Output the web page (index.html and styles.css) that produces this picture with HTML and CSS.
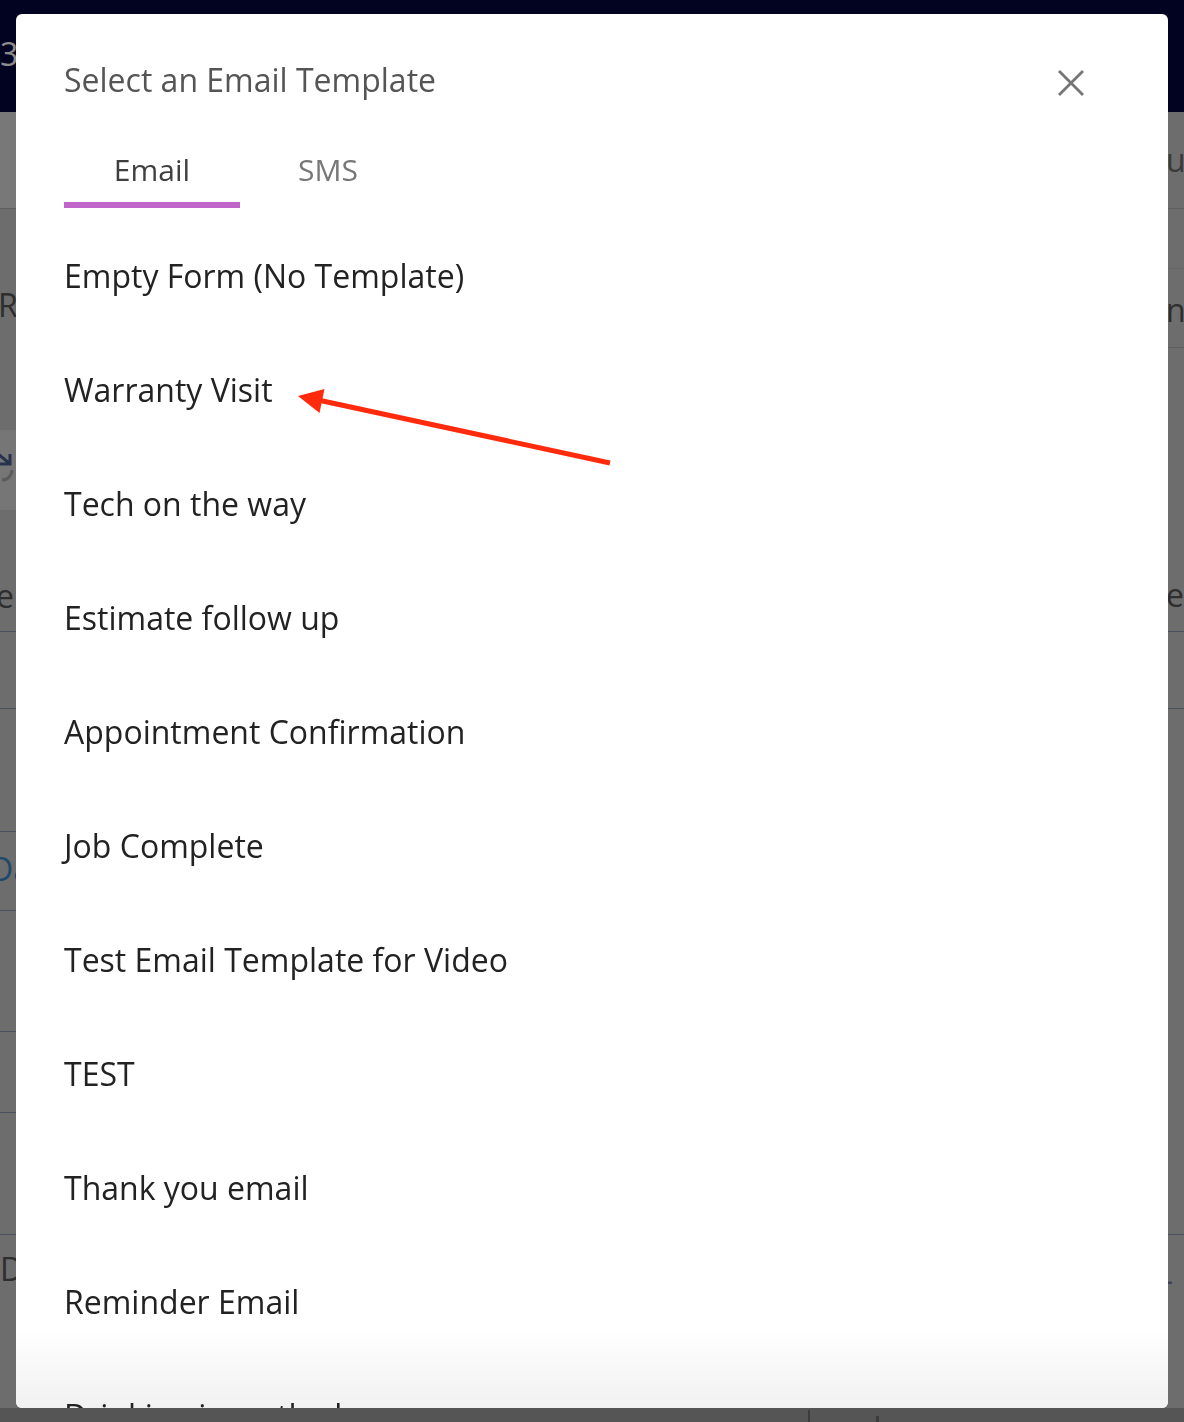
FILE: index.html
```html
<!DOCTYPE html>
<html lang="en">
<head>
<meta charset="utf-8">
<title>Select an Email Template</title>
<link rel="stylesheet" href="styles.css">
</head>
<body>
<div class="page">
  <header class="topbar"><span class="topbar-num">3</span></header>
  <div class="cols">
    <div class="col col-left">
      <div class="row r-l1"></div>
      <div class="row r-l2"><span class="bg-text">R</span></div>
      <div class="row r-l3"><span class="bg-icon"><svg width="16" height="36" viewBox="0 0 16 36"><path d="M-4 4 L10 16 M10 6 V16 H0" fill="none" stroke="#27324f" stroke-width="3"/><path d="M12 22 A10 10 0 0 1 2 32" fill="none" stroke="#5b5b5b" stroke-width="3"/></svg></span></div>
      <div class="row r-l4"><span class="bg-text">e</span></div>
      <div class="row r-l5"></div>
      <div class="row r-l6"></div>
      <div class="row r-l7"><span class="bg-text bg-link">Da</span></div>
      <div class="row r-l8"></div>
      <div class="row r-l9"></div>
      <div class="row r-l10"></div>
      <div class="row r-l11"><span class="bg-text">D</span></div>
    </div>
    <div class="col col-right">
      <div class="row r-r1"><span class="bg-text">ur</span></div>
      <div class="row r-r2"></div>
      <div class="row r-r3"><span class="bg-text">ni</span></div>
      <div class="row r-r4"><span class="bg-text">er</span></div>
      <div class="row r-r5"></div>
      <div class="row r-r6"></div>
      <div class="row r-r7"><span class="bg-dash">- -</span></div>
    </div>
  </div>
  <div class="page-bottom"><span class="page-bottom-rule"></span><span class="page-bottom-mark"></span></div>
</div>

<div class="modal" role="dialog" aria-labelledby="modal-title">
  <div class="modal-header">
    <h2 class="modal-title" id="modal-title">Select an Email Template</h2>
    <button class="close" aria-label="Close">
      <svg width="40" height="40" viewBox="0 0 40 40"><path d="M8 8 L32 32 M32 8 L8 32" stroke="#757575" stroke-width="2.8" fill="none"/></svg>
    </button>
  </div>
  <div class="tabs">
    <div class="tab active">Email</div>
    <div class="tab">SMS</div>
  </div>
  <ul class="list">
    <li class="item">Empty Form (No Template)</li>
    <li class="item">Warranty Visit</li>
    <li class="item">Tech on the way</li>
    <li class="item">Estimate follow up</li>
    <li class="item">Appointment Confirmation</li>
    <li class="item">Job Complete</li>
    <li class="item">Test Email Template for Video</li>
    <li class="item">TEST</li>
    <li class="item">Thank you email</li>
    <li class="item">Reminder Email</li>
    <li class="item">Drinking is on the house</li>
  </ul>
  <div class="fade"></div>
</div>

<svg class="annotation" width="1184" height="1422" viewBox="0 0 1184 1422" aria-hidden="true">
  <line x1="610" y1="463" x2="318" y2="400" stroke="#ff2b0c" stroke-width="5"/>
  <polygon points="298,396 324.5,389 319.5,413" fill="#ff2b0c"/>
</svg>
</body>
</html>
```
FILE: styles.css
```css
html, body {
  margin: 0;
  padding: 0;
  overflow: hidden;
}
body {
  width: 1184px;
  height: 1422px;
  font-family: "Open Sans", "Liberation Sans", sans-serif;
}

/* dimmed page behind the dialog */
.page {
  width: 1184px;
  height: 1422px;
  background: #6d6d6d;
  overflow: hidden;
}
.topbar {
  height: 112px;
  background: #020321;
  display: flex;
  align-items: flex-start;
}
.topbar-num {
  font-size: 32px;
  line-height: 38px;
  padding-top: 35px;
  color: #8c8c8c;
}
.cols {
  display: grid;
  grid-template-columns: 592px 592px;
}
.row {
  box-sizing: border-box;
  display: flex;
  align-items: flex-start;
  white-space: nowrap;
}
.bg-text {
  font-size: 32px;
  line-height: 38px;
  color: #2e2e2e;
}
.bg-link { color: #1d4a6c; }
.col-right .row { padding-left: 574px; }

.r-l1 { height: 97px; background: #787878; border-bottom: 1px solid #5e5e5e; }
.r-l2 { height: 221px; padding-top: 77px; }
.r-l2 .bg-text { margin-left: -2px; }
.r-l3 { height: 80px; background: #767676; padding-top: 18px; width: 100px; }
.r-l4 { height: 122px; border-bottom: 1px solid #4a4f5d; padding-top: 67px; }
.r-l4 .bg-text { margin-left: -4px; }
.r-l5 { height: 77px; border-bottom: 1px solid #4a4f5d; }
.r-l6 { height: 123px; border-bottom: 1px solid #4a4f5d; }
.r-l7 { height: 79px; border-bottom: 1px solid #4a4f5d; padding-top: 18px; }
.r-l7 .bg-text { margin-left: -10px; }
.r-l8 { height: 121px; border-bottom: 1px solid #4a4f5d; }
.r-l9 { height: 81px; border-bottom: 1px solid #4a4f5d; }
.r-l10 { height: 122px; border-bottom: 1px solid #4a4f5d; }
.r-l11 { height: 173px; padding-top: 15px; }

.r-r1 { height: 97px; border-bottom: 1px solid #5e5e5e; padding-top: 29px; }
.r-r1 .bg-text { color: #3a3a3a; }
.r-r2 { height: 60px; border-bottom: 1px solid #666666; }
.r-r3 { height: 79px; border-bottom: 1px solid #5e5e5e; padding-top: 22px; }
.r-r4 { height: 284px; border-bottom: 1px solid #4a4f5d; padding-top: 228px; }
.r-r5 { height: 77px; border-bottom: 1px solid #4a4f5d; }
.r-r6 { height: 526px; border-bottom: 1px solid #4a4f5d; }
.r-r7 { height: 173px; padding-top: 32px; }
.bg-dash {
  font-size: 20px;
  letter-spacing: 4px;
  color: #3c4352;
  font-weight: 700;
}
.page-bottom {
  height: 14px;
  background: #555555;
  display: flex;
  align-items: flex-end;
}
.page-bottom-rule {
  margin-left: 808px;
  width: 2px;
  height: 12px;
  background: #3c3c3c;
}
.page-bottom-mark {
  margin-left: 66px;
  width: 3px;
  height: 6px;
  background: #3c3c3c;
}

/* dialog */
.modal {
  position: fixed;
  left: 16px;
  top: 14px;
  width: 1152px;
  height: 1394px;
  background: #ffffff;
  border-radius: 6px;
  overflow: hidden;
}
.modal-header {
  display: flex;
  justify-content: space-between;
  align-items: flex-start;
  height: 38px;
  padding: 47px 77px 0 48px;
}
.modal-title {
  margin: 0;
  font-size: 32px;
  line-height: 38px;
  font-weight: 400;
  color: #555555;
}
.close {
  width: 40px;
  height: 40px;
  margin-top: 2px;
  padding: 0;
  border: 0;
  background: none;
  display: block;
  flex: none;
}
.close svg { display: block; }
.tabs {
  display: flex;
  margin: 52px 0 0 48px;
}
.tab {
  width: 176px;
  text-align: center;
  font-size: 30px;
  line-height: 38px;
  padding-bottom: 13px;
  border-bottom: 6px solid transparent;
  color: #777777;
}
.tab.active {
  color: #3f3f3f;
  border-bottom-color: #c065c9;
}
.list {
  position: relative;
  z-index: 1;
  list-style: none;
  margin: 11px 0 0;
  padding: 0 0 0 48px;
}
.item {
  height: 114px;
  font-size: 32px;
  line-height: 114px;
  color: #222222;
  white-space: nowrap;
}
.fade {
  position: absolute;
  left: 0;
  right: 0;
  bottom: 0;
  height: 80px;
  background: linear-gradient(to bottom, rgba(255,255,255,0), #f1f1f1);
}

.annotation {
  position: fixed;
  left: 0;
  top: 0;
  pointer-events: none;
}
```
